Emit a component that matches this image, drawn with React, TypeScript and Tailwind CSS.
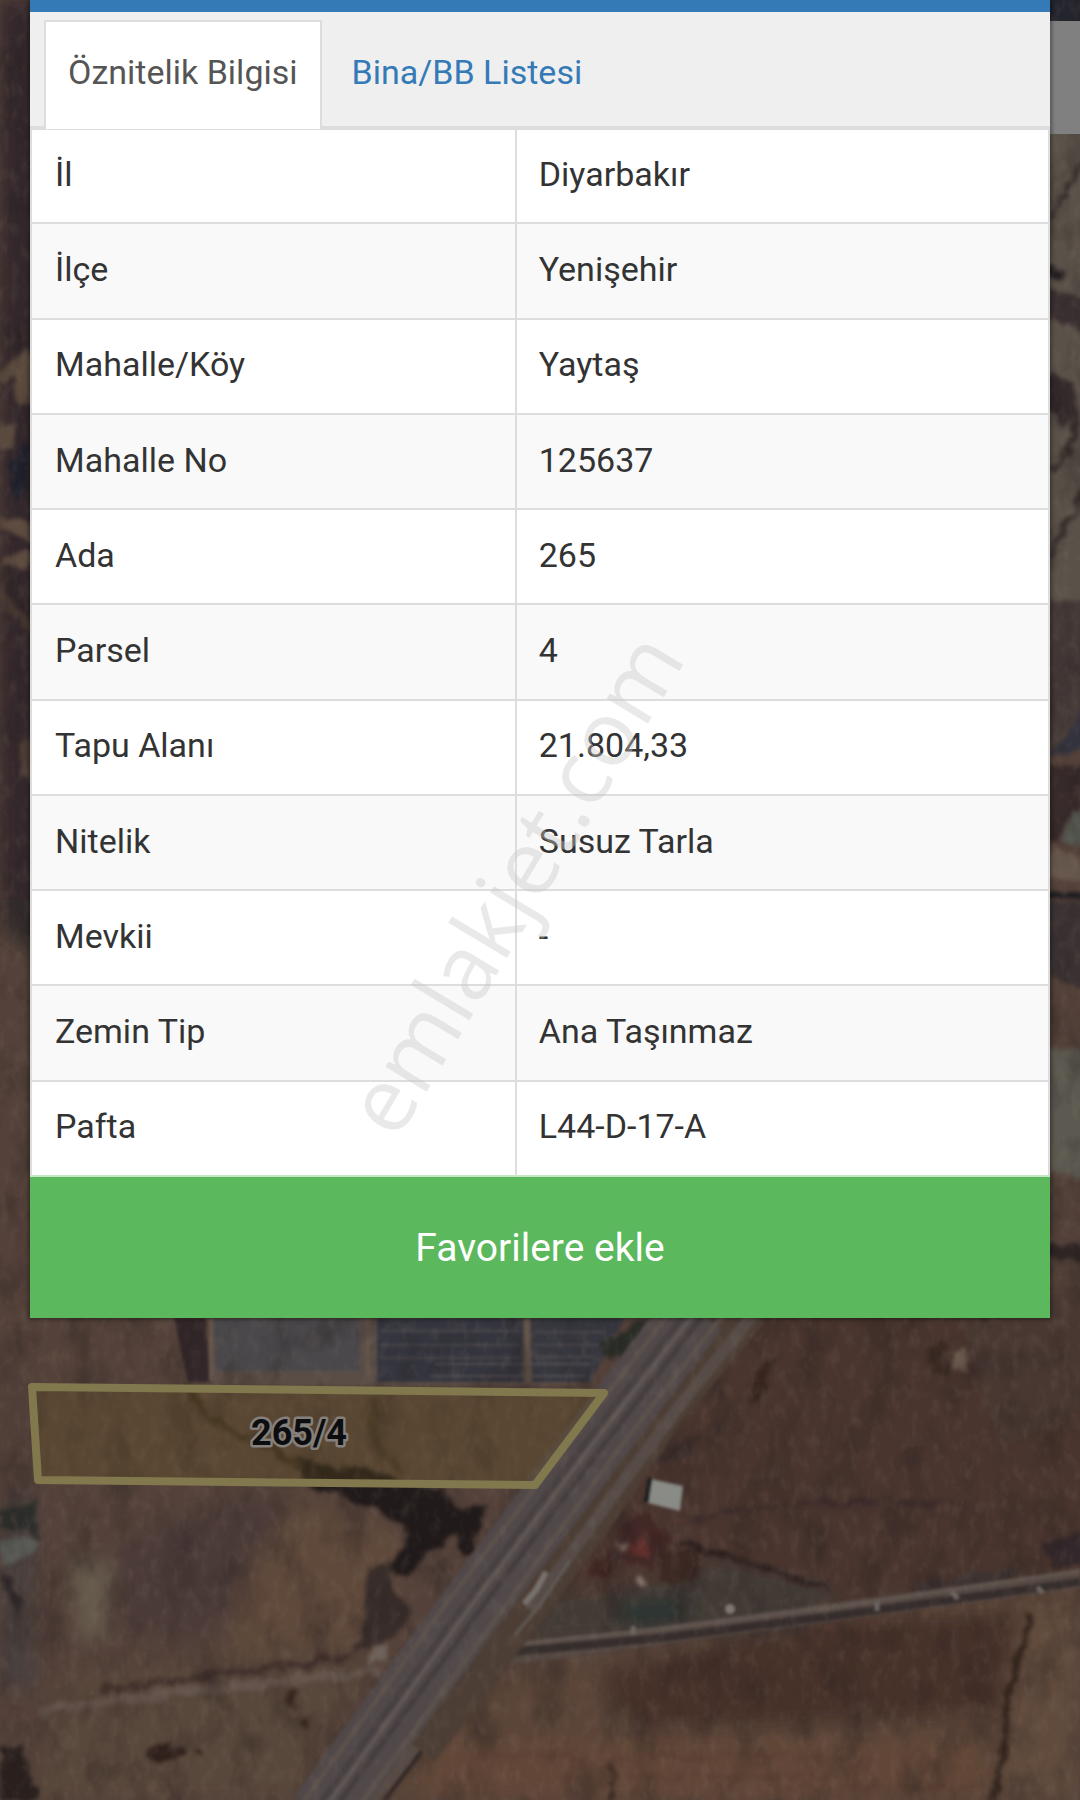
const parcelInfo = [
  { label: "İl", value: "Diyarbakır" },
  { label: "İlçe", value: "Yenişehir" },
  { label: "Mahalle/Köy", value: "Yaytaş" },
  { label: "Mahalle No", value: "125637" },
  { label: "Ada", value: "265" },
  { label: "Parsel", value: "4" },
  { label: "Tapu Alanı", value: "21.804,33" },
  { label: "Nitelik", value: "Susuz Tarla" },
  { label: "Mevkii", value: "-" },
  { label: "Zemin Tip", value: "Ana Taşınmaz" },
  { label: "Pafta", value: "L44-D-17-A" },
];

const SatelliteMap = () => (
  <svg
    className="absolute inset-0 h-full w-full"
    viewBox="0 0 1080 1800"
    preserveAspectRatio="xMidYMid slice"
    aria-hidden="true"
  >
    <defs>
      <filter id="soft" x="-10%" y="-10%" width="120%" height="120%">
        <feGaussianBlur stdDeviation="9" />
      </filter>
      <filter id="edge" x="-5%" y="-5%" width="110%" height="110%" colorInterpolationFilters="sRGB">
        <feTurbulence type="fractalNoise" baseFrequency="0.06" numOctaves="4" seed="4" />
        <feDisplacementMap in="SourceGraphic" scale="16" xChannelSelector="R" yChannelSelector="G" />
        <feGaussianBlur stdDeviation="2" />
      </filter>
      <filter id="fine" colorInterpolationFilters="sRGB">
        <feGaussianBlur stdDeviation="1.5" />
      </filter>
      <filter id="ground" x="0" y="0" width="100%" height="100%" colorInterpolationFilters="sRGB">
        <feTurbulence type="fractalNoise" baseFrequency="0.03 0.02" numOctaves="4" seed="9" />
        <feColorMatrix values="0 0 0 0 0.14  0 0 0 0 0.11  0 0 0 0 0.11  2.4 0 0 0 -1.1" />
      </filter>
      <filter id="grain" x="0" y="0" width="100%" height="100%" colorInterpolationFilters="sRGB">
        <feTurbulence type="fractalNoise" baseFrequency="0.1 0.06" numOctaves="3" seed="21" />
        <feColorMatrix values="0 0 0 0 0.6  0 0 0 0 0.53  0 0 0 0 0.48  0 2 0 0 -0.95" />
      </filter>
    </defs>

    <rect width="1080" height="1800" fill="#54423a" />

    {/* Fields */}
    <g filter="url(#soft)">
      <path d="M0 0H40V900H0z" fill="#30272a" />
      <path d="M0 900H40V960L0 925z" fill="#302c29" />
      <path d="M760 1300H1100V1575L700 1625L520 1640L640 1450z" fill="#48352f" />
      <path d="M950 1290H1100V1400L1000 1450z" fill="#493830" />
      <path d="M120 1540L270 1490L290 1560L200 1640L120 1630z" fill="#4b3b37" />
      <path d="M300 1500L400 1530L390 1640L230 1660L240 1580z" fill="#5f483a" />
      <path d="M70 1560L110 1560L105 1640L80 1640z" fill="#665b4e" />
      <path d="M0 1470H35V1690H0z" fill="#493f3d" />
      <path d="M60 1680L380 1640L300 1800H40z" fill="#58463a" />
      <path d="M480 1680L1080 1570V1800H370z" fill="#5a4538" />
      <path d="M600 1670L830 1620L1025 1610L1000 1715L650 1730L610 1705z" fill="#46322a" />
      <path d="M440 1740L980 1740V1800H420z" fill="#624739" />
      <path d="M1020 1610H1080V1800H1000z" fill="#604b3d" />
      <path d="M560 1585L720 1560L840 1590L800 1630L520 1645z" fill="#423a34" />
      <path d="M618 1600L688 1597L688 1623L622 1628z" fill="#2b3630" />
      <path d="M580 1560L690 1520L705 1570L570 1600z" fill="#4e3730" />
      <path d="M0 1340H30V1500H0z" fill="#503c37" />
    </g>

    {/* Greenhouses above the parcel */}
    <g filter="url(#fine)">
      <path d="M174 1318H205L210 1382H188z" fill="#33272a" />
      <path d="M210 1318H625L575 1385H213z" fill="#5a4d46" />
      <path d="M214 1318H360V1371H216z" fill="#4a484b" />
      <path d="M377 1318H523V1382H377z" fill="#34353e" />
      <path d="M531 1318H625L590 1382H532z" fill="#36373f" />
      <path d="M216 1330H355M216 1342H350M216 1354H355M380 1331H520M380 1345H520M380 1358H520M535 1332H605M535 1345H600M535 1357H595" stroke="#4a484b" strokeWidth="2" />
      <path d="M435 1364H590M430 1376H585" stroke="#65605f" strokeWidth="2" opacity=".6" />
      <path d="M211 1318V1381M368 1318V1376M527 1318V1382" stroke="#66574c" strokeWidth="4" />
    </g>

    {/* Tree shade and scrub */}
    <g filter="url(#edge)">
      <path d="M298 1460L330 1466L370 1468L405 1482L445 1492L458 1512L485 1508L480 1532L466 1558L452 1535L434 1548L409 1575L389 1571L409 1538L404 1523L349 1500L309 1488z" fill="#201a1a" />
      <path d="M366 1568L389 1563L396 1593L414 1608L404 1628L379 1643L356 1653L364 1613z" fill="#382d2a" />
      <path d="M188 1385Q202 1418 242 1435T302 1468" fill="none" stroke="#3a2d22" strokeWidth="7" />
      <path d="M372 1398L377 1443L402 1473" fill="none" stroke="#44362a" strokeWidth="8" />
      <path d="M600 1345L650 1318L660 1325L625 1352L605 1362z" fill="#292c26" />
      <path d="M0 1510L35 1500L38 1535L0 1530z" fill="#2c2e2b" />
      <path d="M0 1542L38 1538L34 1555L0 1562z" fill="#5a5c57" />
      <path d="M0 1565L25 1600L18 1620z" fill="#30282a" />
      <path d="M0 1745L18 1745L38 1800H0z" fill="#29201e" />
      <path d="M148 1747H185V1758H150zM194 1750H202V1756H194z" fill="#30211c" />
      <path d="M285 1690L300 1688L296 1708L288 1705zM298 1724L310 1720L308 1735z" fill="#38271f" />
      <path d="M620 1525L645 1510L675 1538L650 1570L622 1560z" fill="#422826" />
      <path d="M592 1562L614 1550L608 1577L590 1577z" fill="#422723" />
      <path d="M657 1553L702 1548L697 1578L662 1585z" fill="#3c2924" />
      <path d="M628 1550L646 1540L650 1558L640 1558z" fill="#602e2b" />
      <path d="M615 1538L626 1550M634 1574L640 1584" stroke="#8d7a71" strokeWidth="5" />
      <path d="M764 1358L779 1358L759 1398L749 1403z" fill="#37261f" />
      <path d="M655 1455L700 1435L690 1455L660 1465z" fill="#3a2d2a" />
      <path d="M930 1350L945 1335L950 1374L935 1374z" fill="#382922" />
      <path d="M954 1350L968 1350L966 1371L956 1371z" fill="#6b5c50" />
      <path d="M1044 1543L1084 1533V1563L1054 1568z" fill="#32272a" />
      <path d="M912 1584L1022 1569L1017 1579L912 1594z" fill="#3d3432" />
      <path d="M690 1520L740 1508L870 1501L970 1505" fill="none" stroke="#35272a" strokeWidth="4" opacity=".7" />
      <path d="M680 1543L760 1566L830 1591" fill="none" stroke="#2a1e1c" strokeWidth="5" />
      <path d="M1030 1613L1012 1683L1002 1753L994 1803" fill="none" stroke="#33251d" strokeWidth="7" />
      <path d="M612 1762V1804" stroke="#30241f" strokeWidth="4" />
      <path d="M485 1757H590M650 1757H860M600 1777H850M780 1787H990" stroke="#543c32" strokeWidth="3" opacity=".7" />
      <path d="M40 1712L200 1690L380 1671" fill="none" stroke="#65554d" strokeWidth="9" />
      <path d="M100 1690L220 1675L350 1657" fill="none" stroke="#42312c" strokeWidth="7" />
      <path d="M370 1645L390 1640L392 1662L370 1665z" fill="#6e625b" />
    </g>

    {/* Strips beside the dialog */}
    <g filter="url(#edge)">
      <path d="M12 370L35 355V405L15 400z" fill="#5b4a3d" />
      <path d="M0 372L30 345V360L0 385zM-5 425L15 422V450H-5z" fill="#5a4a3e" />
      <path d="M8 465L30 440V490L15 500z" fill="#1e202c" />
      <path d="M0 515L32 525V540L0 528zM0 558L32 552V565L0 568z" fill="#5f4c40" />
      <path d="M0 590L32 620V635L0 600zM20 745L35 740V790L22 775z" fill="#4c3c33" />
      <path d="M1040 -10H1100V30H1040z" fill="#23252e" />
      <path d="M1040 120H1100V680H1040z" fill="#5a5249" />
      <path d="M1040 262L1066 272L1060 280L1040 272z" fill="#251e22" />
      <path d="M1040 285L1100 305V340L1040 318z" fill="#392f30" />
      <path d="M1040 372L1074 380L1080 410L1066 425L1040 405z" fill="#342a2b" />
      <path d="M1080 405L1068 450L1050 472M1090 480L1050 560M1090 140L1052 220" fill="none" stroke="#342b29" strokeWidth="5" />
      <path d="M1040 600H1100V700L1050 745H1040z" fill="#443937" />
      <path d="M1100 690L1050 755H1072L1100 730z" fill="#33333d" />
      <path d="M1040 765H1100L1055 845H1040z" fill="#382b2b" />
      <path d="M1100 770V850L1060 840z" fill="#555951" />
      <path d="M1040 850L1100 857V885L1040 875z" fill="#65564b" />
      <path d="M1040 888L1100 894V902L1040 896z" fill="#17181d" />
      <path d="M1040 900L1100 908V1000L1040 970z" fill="#3a3132" />
      <path d="M1040 1045L1100 1055V1185L1040 1170z" fill="#5b5950" />
      <path d="M1040 1240L1100 1250V1265L1040 1255z" fill="#2e2525" />
    </g>

    <rect width="1080" height="1800" filter="url(#ground)" opacity=".35" />

    {/* Roads */}
    <g filter="url(#fine)" fill="none">
      <path d="M440 1665L1080 1579" stroke="#544843" strokeWidth="18" />
      <path d="M470 1656L660 1638L840 1615L1080 1582" stroke="#352d2c" strokeWidth="8" />
      <path d="M470 1649L660 1629L840 1606L1080 1571" stroke="#60554f" strokeWidth="4" />
      <path d="M490 1660L425 1735L370 1800" stroke="#574b45" strokeWidth="14" />
      <path d="M490 1668L430 1740L385 1800" stroke="#322928" strokeWidth="4" />
      <path d="M750 1310L665 1412L600 1510L500 1645L420 1750" stroke="#4c3e35" strokeWidth="38" />
      <path d="M757 1310L680 1405L610 1500L530 1610" stroke="#564b46" strokeWidth="12" />
      <path d="M696 1310L590 1450L470 1610L320 1815" stroke="#504849" strokeWidth="64" />
      <path d="M672 1310L564 1450L440 1612L294 1815" stroke="#5b514b" strokeWidth="5" />
      <path d="M688 1310L580 1450L460 1610L312 1815" stroke="#474041" strokeWidth="6" />
      <path d="M697 1310L588 1450L468 1610L320 1815" stroke="#615855" strokeWidth="4" />
      <path d="M707 1310L600 1450L480 1610L330 1815" stroke="#443d3d" strokeWidth="5" />
      <path d="M727 1310L618 1450L495 1620L352 1815" stroke="#5b514b" strokeWidth="5" />
      <path d="M546 1572L536 1590L524 1604" stroke="#78726d" strokeWidth="6" />
      <path d="M570 1560L540 1605L515 1635" stroke="#605a55" strokeWidth="3" />
      <path d="M633 1626V1635M877 1602V1611M952 1592L958 1599M1037 1587L1043 1593" stroke="#6c6662" strokeWidth="5" />
      <path d="M651 1479L683 1486L680 1511L648 1503z" fill="#898b87" />
      <path d="M650 1478L646 1502" stroke="#15191a" strokeWidth="4" />
      <circle cx="730" cy="1609" r="5" fill="#7f7772" />
    </g>

    <rect width="1080" height="1800" filter="url(#grain)" opacity=".16" />

    <path
      d="M32 1387L604 1393L535 1485L38 1480z"
      fill="#6b5620"
      fillOpacity=".25"
      stroke="#81784e"
      strokeWidth="8"
      strokeLinejoin="round"
    />
    <text
      x="299"
      y="1445"
      textAnchor="middle"
      className="font-[Roboto,sans-serif] text-[36px] font-bold"
      fill="#0c0d0e"
      stroke="#85807b"
      strokeWidth="5"
      strokeLinejoin="round"
      paintOrder="stroke"
    >
      265/4
    </text>
  </svg>
);

const Tabs = () => (
  <nav className="flex items-end border-b-4 border-[#ddd] bg-[#efefef] px-3.5 pt-2">
    <a
      href="#oznitelik"
      aria-current="page"
      className="-mb-[3px] border-2 border-b-0 border-[#ddd] bg-white px-[22px] pt-[27px] pb-[34px] text-[#555]"
    >
      Öznitelik Bilgisi
    </a>
    <a href="#bina" className="px-[30px] pt-[27px] pb-[31px] text-[#337ab7]">
      Bina/BB Listesi
    </a>
  </nav>
);

const App = () => {
  return (
    <div className="relative min-h-screen overflow-hidden bg-[#54413a] font-[Roboto,sans-serif] text-[34px] leading-[46px]">
      <SatelliteMap />
      <div className="absolute top-[21px] right-0 h-[113px] w-[30px] bg-[#808080]"></div>

      <main className="relative mx-[30px] bg-white shadow-[0_0_4px_2px_rgba(0,0,0,0.35)]">
        <div className="h-3 bg-[#337ab7]"></div>
        <Tabs />
        <table className="h-[1047px] w-full border-collapse border-x-2 border-[#ddd] text-[#333]">
          <tbody>
            {parcelInfo.map((row) => (
              <tr key={row.label} className="border-b-2 border-[#ddd] last:border-[#c3e6c3] even:bg-[#f9f9f9]">
                <th scope="row" className="w-10/21 border-r-2 border-[#ddd] px-[23px] pb-1 text-left font-normal">
                  {row.label}
                </th>
                <td className="px-[22px] pb-1">{row.value}</td>
              </tr>
            ))}
          </tbody>
        </table>
        <button type="button" className="block h-[141px] w-full bg-[#5cb85c] text-[39px] text-white">
          Favorilere ekle
        </button>
      </main>

      {/* Watermark */}
      <div className="pointer-events-none absolute inset-0 flex items-center justify-center pr-14 pb-9">
        <span className="-rotate-59 font-['Open_Sans',sans-serif] text-[90px] leading-none text-[#c8c8c8]/40">
          emlakjet.com
        </span>
      </div>
    </div>
  );
};

export default App;
